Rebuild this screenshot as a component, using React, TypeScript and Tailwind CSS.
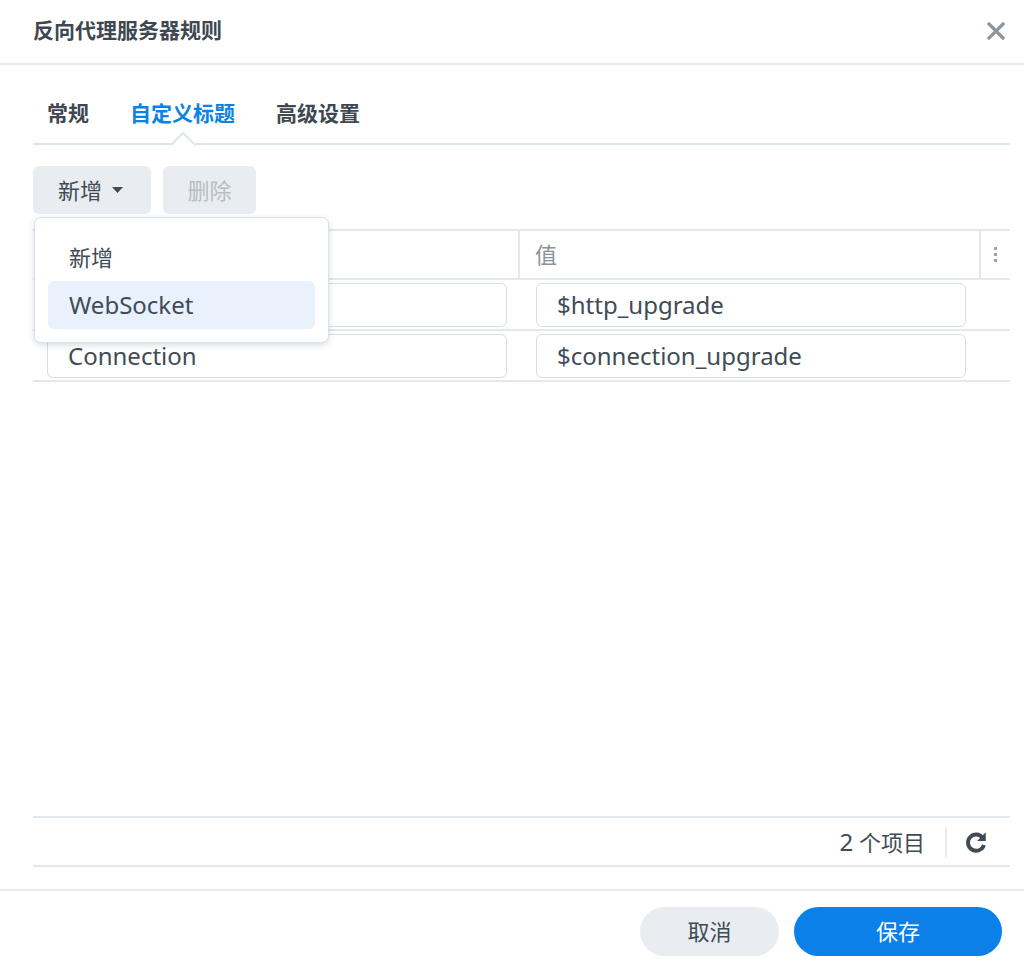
import React from "react";

function CloseIcon() {
  return (
    <svg width="18" height="18" viewBox="0 0 18 18">
      <path d="M2 2 L16 16 M16 2 L2 16" stroke="#8e959c" strokeWidth="3.2" strokeLinecap="square" />
    </svg>
  );
}

function RefreshIcon() {
  return (
    <svg width="26" height="26" viewBox="0 0 24 24">
      <path
        d="M18.2 8.2 A7.5 7.5 0 1 0 19.3 14.8"
        fill="none"
        stroke="#414b55"
        strokeWidth="3.6"
      />
      <path d="M21 3 L21 11 L13 11 Z" fill="#414b55" />
    </svg>
  );
}

function Input({ value }: { value: string }) {
  return (
    <div className="h-[44px] w-full rounded-[6px] border border-[#d6dee6] bg-white px-[20px] flex items-center text-[24px] text-[#414b55]">
      {value}
    </div>
  );
}

export default function App() {
  const rows = [
    { name: "", value: "$http_upgrade" },
    { name: "Connection", value: "$connection_upgrade" },
  ];

  return (
    <div className="relative w-[1024px] h-[970px] bg-white flex flex-col font-['Noto_Sans','Noto_Sans_CJK_SC',sans-serif] text-[#414b55]">
      {/* header */}
      <div className="h-[65px] shrink-0 flex items-center justify-between pl-[33px] pr-[19px] pb-[1px] border-b-2 border-[#e6ebf1]">
        <h1 className="text-[21px] font-bold text-[#3f4750]">反向代理服务器规则</h1>
        <CloseIcon />
      </div>

      {/* body */}
      <div className="flex-1 flex flex-col pl-[33px] pr-[14px]">
        {/* tabs */}
        <div className="relative mt-[31px] h-[49px] flex items-start gap-[41px] pl-[14px] border-b-2 border-[#dfe5ec]">
          <span className="text-[21px] font-bold leading-[34px] text-[#3f4750]">常规</span>
          <span className="text-[21px] font-bold leading-[34px] text-[#0a82e6]">自定义标题</span>
          <span className="text-[21px] font-bold leading-[34px] text-[#3f4750]">高级设置</span>
          <svg className="absolute left-[138px] top-[36px]" width="24" height="14" viewBox="0 0 24 14">
            <path d="M0 13 L12 1 L24 13" fill="white" stroke="#dfe5ec" strokeWidth="2" />
            <rect x="2" y="12" width="20" height="3" fill="white" />
          </svg>
        </div>

        {/* toolbar */}
        <div className="mt-[21px] flex gap-[12px]">
          <button className="h-[48px] w-[118px] rounded-[6px] bg-[#e9edf2] flex items-center justify-center gap-[10px] pr-[3px] text-[22px] text-[#414b55]">
            新增
            <svg width="11" height="6" viewBox="0 0 11 6">
              <path d="M0 0 L11 0 L5.5 6 Z" fill="#414b55" />
            </svg>
          </button>
          <button className="h-[48px] w-[93px] rounded-[6px] bg-[#e9edf2] flex items-center justify-center text-[22px] text-[#b5bdc5]">
            删除
          </button>
        </div>

        {/* table */}
        <div className="mt-[15px] flex-1 flex flex-col">
          <div className="h-[51px] flex border-y-2 border-[#e3e8ee] text-[22px] text-[#8a939b]">
            <div className="w-[487px] pl-[14px] flex items-center border-r-2 border-[#e3e8ee]" />
            <div className="w-[461px] pl-[15px] flex items-center border-r-2 border-[#e3e8ee]">值</div>
            <div className="flex-1 flex flex-col items-center justify-center gap-[3px]">
              <span className="w-[3px] h-[3px] bg-[#9aa2aa]" />
              <span className="w-[3px] h-[3px] bg-[#9aa2aa]" />
              <span className="w-[3px] h-[3px] bg-[#9aa2aa]" />
            </div>
          </div>
          {rows.map((r) => (
            <div key={r.value} className="h-[51px] flex items-center border-b-2 border-[#e3e8ee]">
              <div className="w-[474px] pl-[14px]">
                <Input value={r.name} />
              </div>
              <div className="w-[459px] pl-[29px]">
                <Input value={r.value} />
              </div>
            </div>
          ))}
          <div className="flex-1" />
          <div className="h-[51px] flex items-center justify-end border-y-2 border-[#e3e8ee]">
            <span className="text-[22px] text-[#414b55]">
              <span className="text-[24px]">2</span> 个项目
            </span>
            <span className="ml-[20px] w-[2px] h-[30px] bg-[#e6ebf0]" />
            <span className="ml-[16px] mr-[21px] flex">
              <RefreshIcon />
            </span>
          </div>
        </div>
      </div>

      {/* footer */}
      <div className="mt-[22px] h-[81px] shrink-0 flex items-start justify-end gap-[15px] pt-[16px] pr-[22px] border-t-2 border-[#e6ebf1]">
        <button className="h-[49px] w-[139px] rounded-full bg-[#e9edf2] text-[22px] text-[#414b55]">取消</button>
        <button className="h-[49px] w-[208px] rounded-full bg-[#0b80e8] text-[22px] text-white">保存</button>
      </div>

      {/* dropdown menu */}
      <div className="absolute left-[34px] top-[217px] w-[295px] rounded-[7px] border border-[#d9e1e9] bg-white shadow-[0_2px_6px_rgba(40,60,90,0.18)] px-[13px] pt-[15px] pb-[13px]">
        <div className="h-[48px] pl-[21px] flex items-center text-[22px] text-[#414b55]">新增</div>
        <div className="h-[48px] pl-[21px] flex items-center rounded-[6px] bg-[#e8f1fc] text-[24px] text-[#414b55]">WebSocket</div>
      </div>
    </div>
  );
}
